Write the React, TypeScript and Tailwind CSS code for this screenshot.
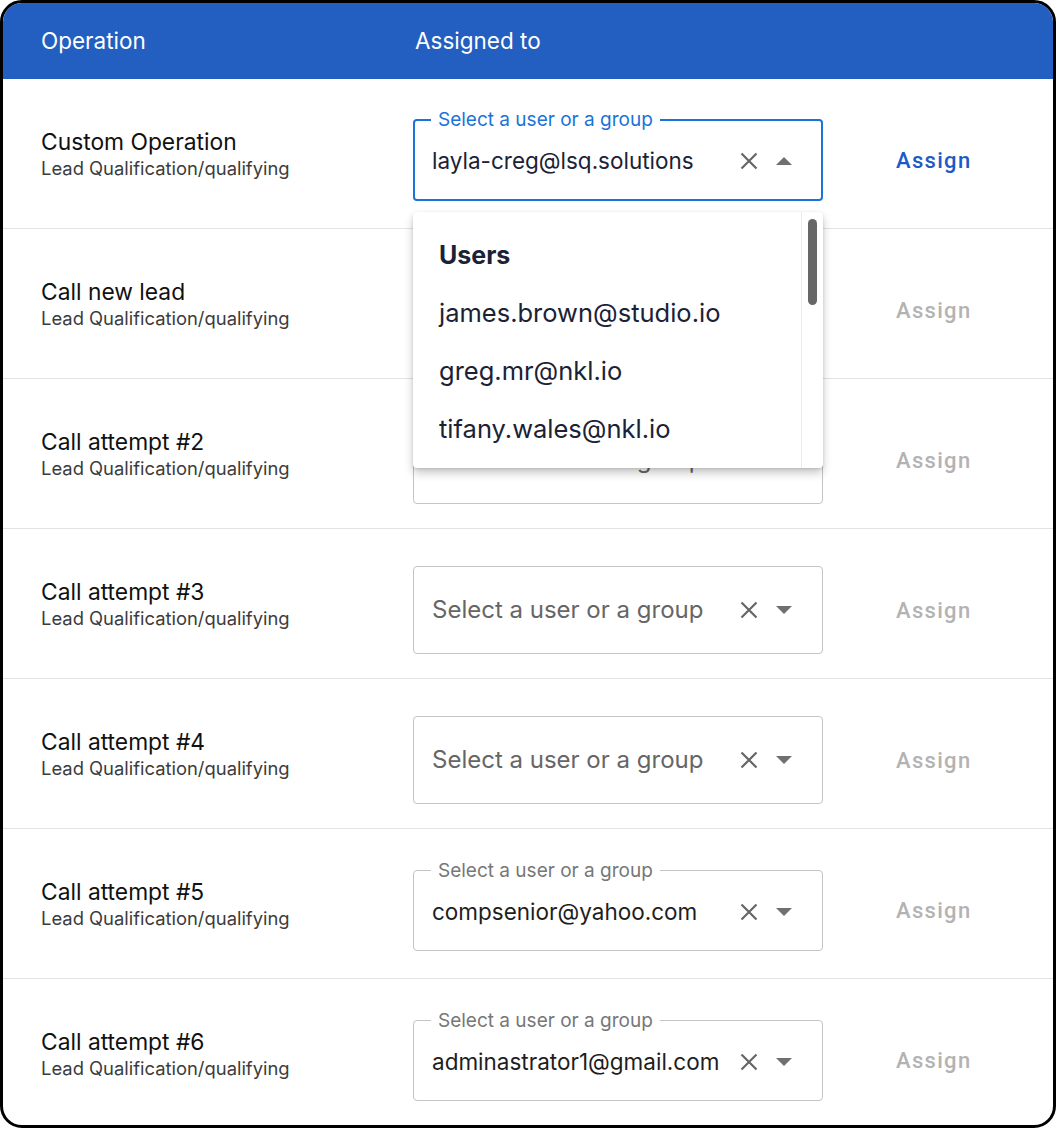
import React from "react"

type Row = {
	title: string
	value?: string
	active?: boolean
	open?: boolean
}

const rows: Row[] = [
	{ title: "Custom Operation", value: "layla-creg@lsq.solutions", active: true, open: true },
	{ title: "Call new lead" },
	{ title: "Call attempt #2" },
	{ title: "Call attempt #3" },
	{ title: "Call attempt #4" },
	{ title: "Call attempt #5", value: "compsenior@yahoo.com" },
	{ title: "Call attempt #6", value: "adminastrator1@gmail.com" },
]

const users = ["james.brown@studio.io", "greg.mr@nkl.io", "tifany.wales@nkl.io"]

const ClearIcon = () => (
	<svg width="18" height="18" viewBox="0 0 18 18" className="shrink-0">
		<path d="M1.5 1.5 16.5 16.5M16.5 1.5 1.5 16.5" stroke="#666" strokeWidth="2.2" />
	</svg>
)

const Caret = ({ up }: { up?: boolean }) => (
	<svg width="16" height="8" viewBox="0 0 16 8" className="shrink-0">
		{up ? <path d="M0 8 8 0 16 8z" fill="#707070" /> : <path d="M0 0 8 8 16 0z" fill="#707070" />}
	</svg>
)

const Icons = ({ up }: { up?: boolean }) => (
	<div className="ml-auto flex shrink-0 items-center gap-[18px] pl-[12px]">
		<ClearIcon />
		<Caret up={up} />
	</div>
)

const Dropdown = () => (
	<div className="absolute left-0 top-[calc(100%+11px)] z-10 flex h-[256px] w-[410px] overflow-hidden rounded-[4px] bg-white shadow-[0_5px_10px_rgba(0,0,0,0.22),0_1px_3px_rgba(0,0,0,0.12)]">
		<ul className="flex-1 pl-[26px] pt-[26px] text-[25.5px] text-[#1b2236]">
			<li className="h-[34px] font-bold leading-[34px] text-[25px]">Users</li>
			{users.map((u) => (
				<li key={u} className="mt-[24px] h-[34px] leading-[34px]">{u}</li>
			))}
		</ul>
		<div className="flex w-[22px] justify-center border-l border-[#ebebeb] pt-[7px]">
			<span className="block h-[86px] w-[9px] rounded-full bg-[#676767]" />
		</div>
	</div>
)

const Select = ({ row }: { row: Row }) => {
	if (!row.value) {
		return (
			<div className="pt-[13px]">
				<div className="flex h-[88px] w-[410px] items-center rounded-[4px] border border-[#c4c4c4] pl-[18px] pr-[30px]">
					<span className="whitespace-nowrap text-[24px] text-[#666]">Select a user or a group</span>
					<Icons />
				</div>
			</div>
		)
	}
	return (
		<div className="relative pt-[4px]">
			<fieldset
				className={`w-[410px] rounded-[4px] pb-[7px] ${row.active ? "border-2 border-[#1a73d9] pl-[17px] pr-[29px]" : "border border-[#c4c4c4] pl-[18px] pr-[30px]"}`}
			>
				<legend className={`ml-[-1px] px-[7px] text-[19px] leading-[20px] ${row.active ? "text-[#1a73d9]" : "text-[#777]"}`}>
					Select a user or a group
				</legend>
				<div className="flex h-[62px] items-center">
					<span className={`whitespace-nowrap text-[22.5px] ${row.active ? "text-[#1b2236]" : "text-[#1e1e1e]"}`}>{row.value}</span>
					<Icons up={row.open} />
				</div>
			</fieldset>
			{row.open && <Dropdown />}
		</div>
	)
}

export default function App() {
	return (
		<div className="h-[1128px] w-[1056px] bg-white" style={{ fontFamily: "Inter, 'Noto Sans', sans-serif" }}>
			<div className="h-[1128px] w-[1056px] overflow-hidden rounded-[22px] border-[3px] border-black bg-white">
				<div className="flex h-[76px] items-center bg-[#235ec1] text-[22.5px] text-white">
					<span className="w-[412px] pl-[38px]">Operation</span>
					<span>Assigned to</span>
				</div>

				{rows.map((row, i) => (
					<div
						key={row.title}
						className={`relative flex h-[150px] items-center border-b border-[#e3e3e3] ${row.open ? "z-10" : ""}`}
					>
						<div className="w-[410px] pl-[38px]">
							<div className="text-[22.8px] leading-[28px] text-[#111]">{row.title}</div>
							<div className="text-[18.4px] leading-[24px] text-[#3c3c3c]">Lead Qualification/qualifying</div>
						</div>
						<Select row={row} />
						<div className="pt-[13px] pl-[73px]" style={{ fontFamily: "Roboto, sans-serif" }}>
							<button
								className={`text-[22px] font-medium tracking-[0.06em] ${i === 0 ? "text-[#1c5bc7]" : "text-[#b3b3b3]"}`}
							>
								Assign
							</button>
						</div>
					</div>
				))}
			</div>
		</div>
	)
}
